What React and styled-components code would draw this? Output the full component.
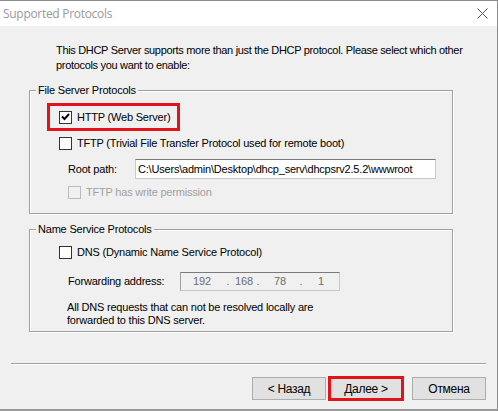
import React from 'react'
import styled, { createGlobalStyle } from 'styled-components'

const GlobalStyle = createGlobalStyle`
    html, body {
        margin: 0;
        padding: 0;
        background: #f0f0f0;
    }
    * {
        box-sizing: border-box;
    }
`

const Window = styled.div`
    width: 498px;
    height: 411px;
    display: flex;
    flex-direction: column;
    background-color: #f0f0f0;
    border-top: 1px solid #8c8c8c;
    border-right: 1px solid #8c8c8c;
    border-bottom: 2px solid #9a9a9a;
    font-family: "Liberation Sans", Arial, sans-serif;
    font-size: 11px;
    letter-spacing: -0.2px;
    color: #000;
`
const TitleBar = styled.div`
    height: 25px;
    flex-shrink: 0;
    background-color: #fff;
    display: flex;
    align-items: center;
    justify-content: space-between;
    padding: 0 9px 0 3px;
`
const Title = styled.span`
    font-family: "Open Sans", "Noto Sans", sans-serif;
    font-size: 12px;
    letter-spacing: -0.3px;
    color: #999;
`
const Body = styled.div`
    flex: 1;
    display: flex;
    flex-direction: column;
    padding: 17px 0 0 29px;
`
const Intro = styled.p`
    margin: 0 0 17px 27px;
    line-height: 15px;
    letter-spacing: -0.32px;
    white-space: nowrap;
`
const Group = styled.div`
    width: 424px;
    height: ${(p) => p.h}px;
    margin-bottom: ${(p) => p.mb || 0}px;
    border: 1px solid #a0a0a0;
    box-shadow: inset 1px 1px 0 #fff, 1px 1px 0 #fff;
    display: flex;
    flex-direction: column;
`
const GroupTitle = styled.div`
    align-self: flex-start;
    margin: -7px 0 0 6px;
    padding: 0 2px;
    line-height: 13px;
    background-color: #f0f0f0;
`
const Row = styled.div`
    display: flex;
    align-items: center;
    height: ${(p) => p.h || 24}px;
    margin-top: ${(p) => p.mt || 0}px;
    padding-left: ${(p) => p.indent || 29}px;
    gap: ${(p) => (p.gap === undefined ? 5 : p.gap)}px;
    color: ${(p) => (p.disabled ? '#a0a0a0' : '#000')};
`
const Highlight = styled.div`
    display: flex;
    align-items: center;
    gap: 5px;
    width: 133px;
    height: 28px;
    margin: 6px 0 0 17px;
    padding-left: 9px;
    border: 3px solid #e3131b;
`
const Box = styled.span`
    width: 13px;
    height: 13px;
    flex-shrink: 0;
    display: inline-flex;
    align-items: center;
    justify-content: center;
    background-color: ${(p) => (p.disabled ? '#f0f0f0' : '#fff')};
    border: 1px solid ${(p) => (p.disabled ? '#bcbcbc' : '#333')};
`
const Label = styled.span`
    width: ${(p) => p.w}px;
    flex-shrink: 0;
`
const Field = styled.div`
    width: ${(p) => p.w}px;
    height: ${(p) => p.h || 20}px;
    display: flex;
    align-items: center;
    padding-left: ${(p) => (p.disabled ? 0 : 2)}px;
    background-color: ${(p) => (p.disabled ? '#f0f0f0' : '#fff')};
    border: 1px solid #c8c8c8;
    border-top-color: #7a7a7a;
    border-left-color: ${(p) => (p.disabled ? '#a0a0a0' : '#c8c8c8')};
    color: ${(p) => (p.disabled ? '#6d6d6d' : '#000')};
    white-space: nowrap;
    overflow: hidden;
`
const IpPart = styled.span`
    width: ${(p) => p.w}px;
    flex-shrink: 0;
    text-align: center;
`
const Note = styled.p`
    margin: 3px 0 0 37px;
    line-height: 13px;
`
const Separator = styled.div`
    margin: 31px 0 0 -18px;
    width: 475px;
    height: 2px;
    border-top: 1px solid #a0a0a0;
    border-bottom: 1px solid #fff;
`
const Buttons = styled.div`
    display: flex;
    justify-content: flex-end;
    align-items: center;
    margin-top: 12px;
    padding-right: 11px;
`
const Button = styled.div`
    position: relative;
    width: ${(p) => p.w || 74}px;
    height: 23px;
    margin-left: ${(p) => p.ml || 0}px;
    display: flex;
    align-items: center;
    justify-content: center;
    background-color: #e1e1e1;
    border: 1px solid #adadad;
    font-size: 12px;
    letter-spacing: -0.3px;

    ${(p) =>
        p.marked &&
        `
        &::after {
            content: '';
            position: absolute;
            top: -2px;
            left: -2px;
            right: -2px;
            bottom: -2px;
            border: 3px solid #e3131b;
        }
    `}
`

function Check({ checked, disabled }) {
    return (
        <Box disabled={disabled}>
            {checked && (
                <svg width="9" height="8" viewBox="0 0 9 8">
                    <path d="M1 3.5 L3.5 6 L8 1" fill="none" stroke="#000" strokeWidth="1.9" />
                </svg>
            )}
        </Box>
    )
}

export default function App() {
    return (
        <Window>
            <GlobalStyle />
            <TitleBar>
                <Title>Supported Protocols</Title>
                <svg width="11" height="11" viewBox="0 0 11 11">
                    <path d="M0.5 0.5 L10.5 10.5 M10.5 0.5 L0.5 10.5" stroke="#555" strokeWidth="1" />
                </svg>
            </TitleBar>
            <Body>
                <Intro>
                    This DHCP Server supports more than just the DHCP protocol. Please select which other
                    <br />
                    protocols you want to enable:
                </Intro>
                <Group h={124} mb={15}>
                    <GroupTitle>File Server Protocols</GroupTitle>
                    <Highlight>
                        <Check checked />
                        <span>HTTP (Web Server)</span>
                    </Highlight>
                    <Row h={24}>
                        <Check />
                        <span>TFTP (Trivial File Transfer Protocol used for remote boot)</span>
                    </Row>
                    <Row h={28} indent={38} gap={0}>
                        <Label w={67}>Root path:</Label>
                        <Field w={301}>C:\Users\admin\Desktop\dhcp_serv\dhcpsrv2.5.2\wwwroot</Field>
                    </Row>
                    <Row h={18} indent={38} disabled>
                        <Check disabled />
                        <span>TFTP has write permission</span>
                    </Row>
                </Group>
                <Group h={103}>
                    <GroupTitle>Name Service Protocols</GroupTitle>
                    <Row h={24} mt={4}>
                        <Check />
                        <span>DNS (Dynamic Name Service Protocol)</span>
                    </Row>
                    <Row h={34} indent={38} gap={0}>
                        <Label w={112}>Forwarding address:</Label>
                        <Field w={160} h={19} disabled>
                            <IpPart w={42}>192</IpPart>
                            <IpPart w={10}>.</IpPart>
                            <IpPart w={22}>168</IpPart>
                            <IpPart w={6}>.</IpPart>
                            <IpPart w={38}>78</IpPart>
                            <IpPart w={4}>.</IpPart>
                            <IpPart w={36}>1</IpPart>
                        </Field>
                    </Row>
                    <Note>
                        All DNS requests that can not be resolved locally are
                        <br />
                        forwarded to this DNS server.
                    </Note>
                </Group>
                <Separator />
                <Buttons>
                    <Button>&lt; Назад</Button>
                    <Button ml={3} marked>Далее &gt;</Button>
                    <Button ml={9}>Отмена</Button>
                </Buttons>
            </Body>
        </Window>
    )
}
